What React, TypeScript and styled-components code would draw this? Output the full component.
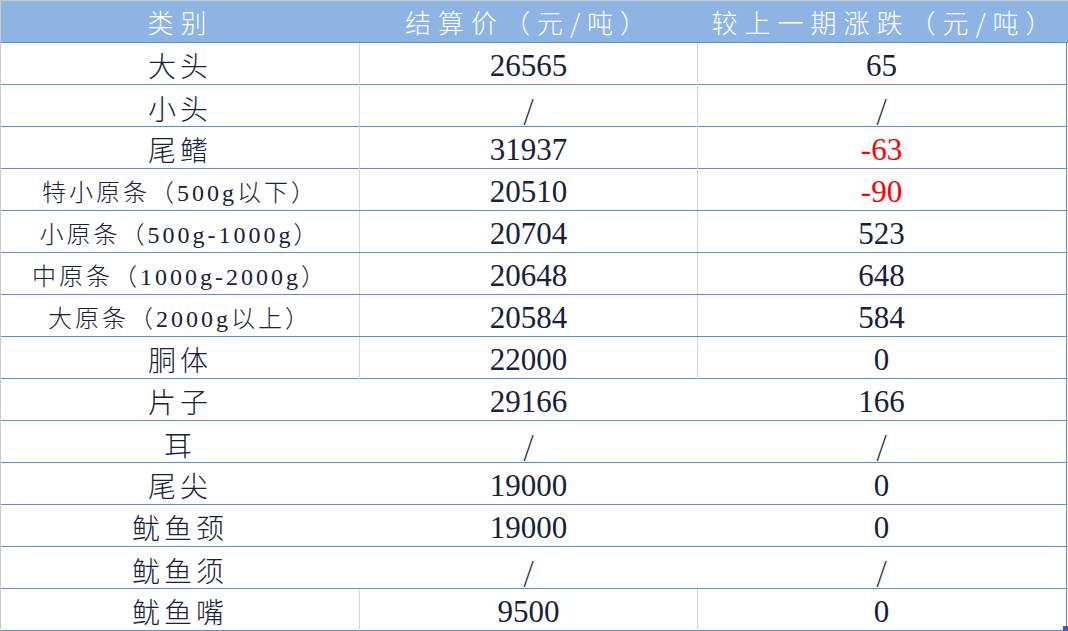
import React from 'react';
import styled, { createGlobalStyle } from 'styled-components';

// --- Global --- //
const GlobalStyle = createGlobalStyle`
  html, body {
    margin: 0;
    padding: 0;
    background: #ffffff;
  }
`;

const CJK = `"Noto Sans CJK SC", "Noto Sans", sans-serif`;
const NUM = `"Liberation Serif", "Noto Sans CJK SC", serif`;

// --- Styled-component --- //
const Sheet = styled.div`
  position: relative;
  width: 1067px;
  height: 630px;
  border-top: 1px solid #c9c9c9;
  border-left: 1px solid #c9c9c9;
  overflow: hidden;
`;

const HeaderRow = styled.div`
  display: grid;
  grid-template-columns: 359px 338px 370px;
  height: 41px;
  background: #8eb4e3;
  border-bottom: 1px solid #5a8fd6;
`;

const HeaderCell = styled.div`
  display: flex;
  align-items: center;
  justify-content: center;
  padding-left: ${(p) => p.$indent || 0}px;
  font-family: ${CJK};
  font-size: 26px;
  font-weight: 300;
  letter-spacing: 7px;
  color: #ffffff;
  white-space: nowrap;
`;

const BodyRow = styled.div`
  display: grid;
  grid-template-columns: 359px 338px 368px;
  width: 1065px;
  height: 41px;
  border-bottom: 1px solid #5a8fd6;
  border-right: 1px solid #5a8fd6;
`;

const NameCell = styled.div`
  display: flex;
  align-items: center;
  justify-content: center;
  border-right: 1px solid ${(p) => (p.$divider ? '#d6d6d6' : 'transparent')};
  font-family: ${NUM};
  font-size: ${(p) => (p.$small ? 24 : 28)}px;
  font-weight: 300;
  letter-spacing: ${(p) => (p.$small ? 3 : 4)}px;
  color: #18203a;
  white-space: nowrap;
  padding-top: 2px;
`;

const ValueCell = styled.div`
  display: flex;
  align-items: center;
  justify-content: center;
  border-right: 1px solid ${(p) => (p.$divider ? '#d6d6d6' : 'transparent')};
  font-family: ${NUM};
  font-size: 31px;
  color: ${(p) => (p.$red ? '#ff0000' : '#18203a')};
  white-space: nowrap;
  padding-top: 4px;
`;

const Slash = styled.span`
  font-family: ${CJK};
  font-size: 27px;
  font-weight: 300;
`;

const Handle = styled.div`
  position: absolute;
  right: 0;
  bottom: 0;
  width: 5px;
  height: 5px;
  background: #3f5cbf;
`;

type Row = {
  name: string;
  price: string;
  change: string;
  small?: boolean;
  divider: boolean;
  red?: boolean;
};

const rows: Row[] = [
  { name: '大头', price: '26565', change: '65', divider: true },
  { name: '小头', price: '/', change: '/', divider: true },
  { name: '尾鳍', price: '31937', change: '-63', divider: true, red: true },
  { name: '特小原条（500g以下）', price: '20510', change: '-90', small: true, divider: true, red: true },
  { name: '小原条（500g-1000g）', price: '20704', change: '523', small: true, divider: true },
  { name: '中原条（1000g-2000g）', price: '20648', change: '648', small: true, divider: true },
  { name: '大原条（2000g以上）', price: '20584', change: '584', small: true, divider: true },
  { name: '胴体', price: '22000', change: '0', divider: true },
  { name: '片子', price: '29166', change: '166', divider: false },
  { name: '耳', price: '/', change: '/', divider: false },
  { name: '尾尖', price: '19000', change: '0', divider: false },
  { name: '鱿鱼颈', price: '19000', change: '0', divider: false },
  { name: '鱿鱼须', price: '/', change: '/', divider: false },
  { name: '鱿鱼嘴', price: '9500', change: '0', divider: true },
];

const renderValue = (v: string) => (v === '/' ? <Slash>/</Slash> : v);

export default function App() {
  return (
    <>
      <GlobalStyle />
      <Sheet>
        <HeaderRow>
          <HeaderCell>类别</HeaderCell>
          <HeaderCell>结算价（元/吨）</HeaderCell>
          <HeaderCell $indent={4}>较上一期涨跌（元/吨）</HeaderCell>
        </HeaderRow>
        {rows.map((r) => (
          <BodyRow key={r.name}>
            <NameCell $divider={r.divider} $small={r.small}>
              {r.name}
            </NameCell>
            <ValueCell $divider={r.divider}>{renderValue(r.price)}</ValueCell>
            <ValueCell $red={r.red}>{renderValue(r.change)}</ValueCell>
          </BodyRow>
        ))}
        <Handle />
      </Sheet>
    </>
  );
}
